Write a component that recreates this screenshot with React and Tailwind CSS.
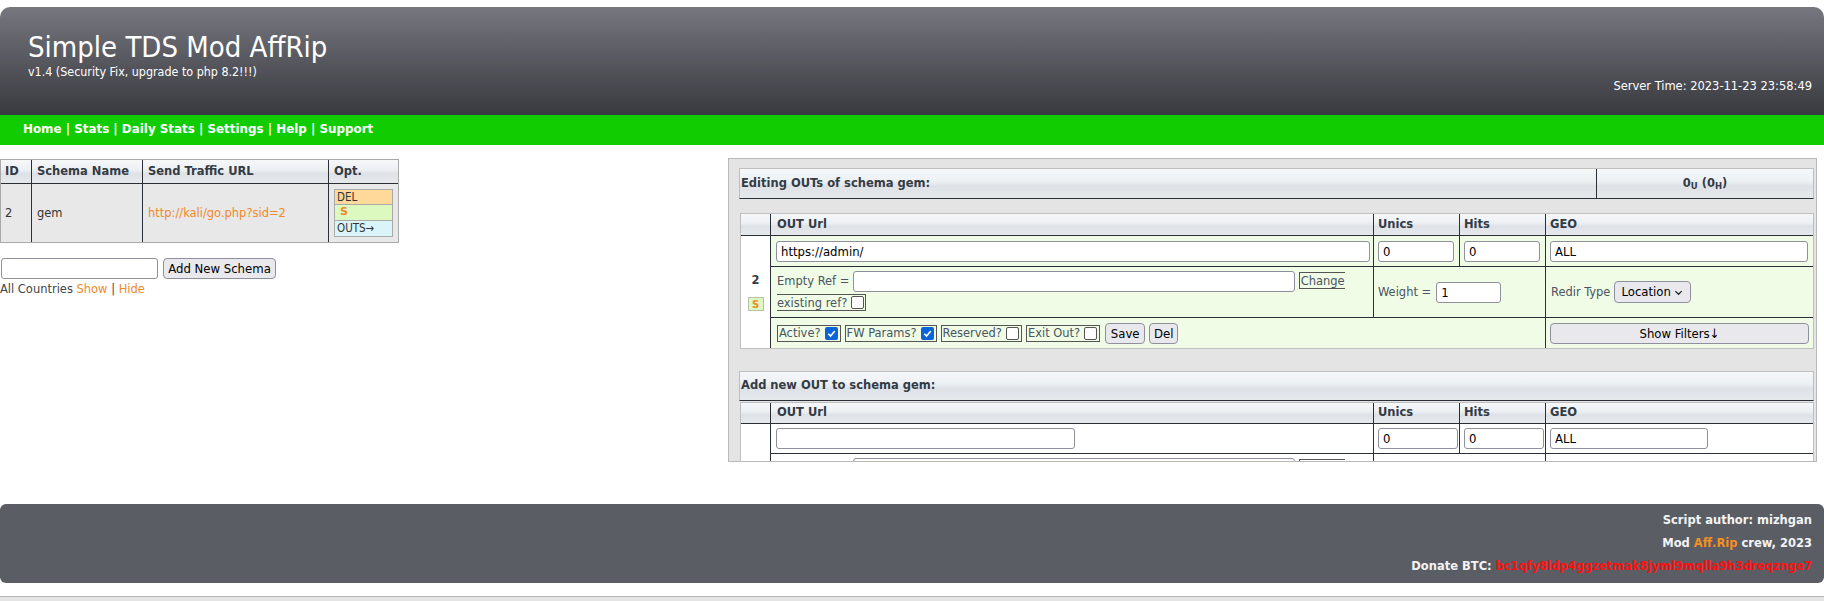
import React from 'react';

const COND = "font-['DejaVu_Sans_Condensed','DejaVu_Sans',sans-serif]";
const WIDE = "font-['DejaVu_Sans',sans-serif]";
const HEAD = 'bg-[linear-gradient(#f5f7f9_0%,#eef1f4_40%,#dee2e7_60%,#e6e9ec_100%)]';
const HTXT = `${WIDE} text-[11.5px] font-bold text-[#333b45]`;
const LINE = 'border-[#2b3038]';

// firefox-ish checkbox
function Check({ on }) {
  if (on) {
    return (
      <span className="inline-flex h-[13px] w-[13px] items-center justify-center rounded-[2px] bg-[#0b63d8]">
        <svg viewBox="0 0 12 12" className="h-[11px] w-[11px]">
          <path d="M2.5 6.3 L5 8.8 L9.6 3.2" stroke="white" strokeWidth="1.8" fill="none" />
        </svg>
      </span>
    );
  }
  return <span className="inline-block h-[13px] w-[13px] rounded-[2px] border border-[#555] bg-white" />;
}

function Field({ value = '', className = '' }) {
  return (
    <input
      readOnly
      value={value}
      className={`h-[21px] rounded-[3px] border border-[#8f8f9d] bg-white px-[4px] text-[13px] text-black outline-none ${className}`}
    />
  );
}

function Btn({ children, className = '' }) {
  return (
    <button className={`h-[21px] rounded-[4px] border border-[#8f8f9d] bg-[#e9e9ed] text-[13px] leading-[19px] text-black ${className}`}>
      {children}
    </button>
  );
}

function Flag({ label, on }) {
  return (
    <span className="inline-flex h-[17px] items-center gap-[4px] border border-[#555] pl-[1px] pr-[2px]">
      {label}
      <Check on={on} />
    </span>
  );
}

function Header() {
  return (
    <div className="pt-[7px]">
      <div className="flex h-[108px] justify-between rounded-t-[10px] bg-linear-to-b from-[#77777f] to-[#393a40] text-white">
        <div className="pl-[28px] pt-[22px]">
          <div className="text-[29px] leading-[36px]">Simple TDS Mod AffRip</div>
          <div className="text-[12.4px] leading-[14px]">v1.4 (Security Fix, upgrade to php 8.2!!!)</div>
        </div>
        <div className="self-end pb-[22px] pr-[12px] text-[12.75px] leading-[14px]">Server Time: 2023-11-23 23:58:49</div>
      </div>
      <div className={`flex h-[30px] items-center bg-[#10cc00] pl-[23px] ${WIDE} text-[11.9px] font-bold text-white`}>
        Home | Stats | Daily Stats | Settings | Help | Support
      </div>
    </div>
  );
}

function LeftSide() {
  const cols = 'grid grid-cols-[30px_111px_186px_70px]';
  return (
    <div className="w-[399px] pt-[1px]">
      <div className="border border-[#a9a9a9]">
        <div className={`${cols} h-[24px] border-b ${LINE} ${HEAD} ${HTXT}`}>
          <div className="flex items-center pl-[4px]">ID</div>
          <div className={`flex items-center border-l ${LINE} pl-[5px]`}>Schema Name</div>
          <div className={`flex items-center border-l ${LINE} pl-[5px]`}>Send Traffic URL</div>
          <div className={`flex items-center border-l ${LINE} pl-[5px]`}>Opt.</div>
        </div>
        <div className={`${cols} h-[58px] bg-[#e8e8e8] text-[#333]`}>
          <div className="flex items-center pl-[4px]">2</div>
          <div className={`flex items-center border-l ${LINE} pl-[5px]`}>gem</div>
          <div className={`flex items-center border-l ${LINE} pl-[5px] text-[#f0892a]`}>http://kali/go.php?sid=2</div>
          <div className={`flex flex-col justify-center border-l ${LINE} pl-[5px] text-[11.5px] leading-[14px]`}>
            <span className="h-[16px] w-[59px] border border-[#aaa] bg-[#ffd99a] pl-[2px]">DEL</span>
            <span className={`h-[16px] w-[59px] border border-t-0 border-[#aaa] bg-[#dcf9c0] pl-[5px] ${WIDE} text-[11px] font-bold text-[#f0892a]`}>S</span>
            <span className="h-[16px] w-[59px] border border-t-0 border-[#aaa] bg-[#d9f5fa] pl-[2px]">OUTS→</span>
          </div>
        </div>
      </div>
      <div className="mt-[15px] flex items-center gap-[5px] pl-[1px]">
        <Field className="w-[157px]" />
        <Btn className="w-[113px] text-[12.5px]">Add New Schema</Btn>
      </div>
      <div className="mt-[3px] leading-[14px] text-[#444]">
        All Countries <span className="text-[#f0892a]">Show</span> | <span className="text-[#f0892a]">Hide</span>
      </div>
    </div>
  );
}

function OutTable({ add }) {
  const bg = add ? 'bg-white' : 'bg-[#f0fce6]';
  const rows = add ? 'grid-rows-[21px_30px_51px_30px]' : 'grid-rows-[22px_31px_51px_30px]';
  const cell = `border-l ${LINE} ${bg}`;
  return (
    <div className="ml-[1px] w-[1074px] border border-[#bfbfbf]">
      <div className={`grid grid-cols-[29px_603px_86px_86px_268px] ${rows} text-[#4a5561]`}>
        <div className={`border-b ${LINE} ${HEAD}`} />
        <div className={`flex items-center border-b border-l ${LINE} ${HEAD} pl-[6px] ${HTXT}`}>OUT Url</div>
        <div className={`flex items-center border-b border-l ${LINE} ${HEAD} pl-[4px] ${HTXT}`}>Unics</div>
        <div className={`flex items-center border-b border-l ${LINE} ${HEAD} pl-[4px] ${HTXT}`}>Hits</div>
        <div className={`flex items-center border-b border-l ${LINE} ${HEAD} pl-[4px] ${HTXT}`}>GEO</div>

        <div className="row-span-3 flex flex-col items-center justify-center gap-[10px] bg-white">
          {!add && (
            <>
              <span className={`${WIDE} text-[11.5px] font-bold leading-[14px] text-[#333b45]`}>2</span>
              <span className={`flex h-[14px] w-[16px] items-center justify-center border border-[#b8c4a8] bg-[#def8c2] ${WIDE} text-[10px] font-bold text-[#f0892a]`}>S</span>
            </>
          )}
        </div>

        <div className={`flex items-center border-b pl-[5px] pr-[3px] ${cell}`}>
          <Field value={add ? '' : 'https://admin/'} className={add ? 'w-[299px]' : 'w-full'} />
        </div>
        <div className={`flex items-center border-b pl-[4px] ${cell}`}>
          <Field value="0" className={add ? 'w-[80px]' : 'w-[76px]'} />
        </div>
        <div className={`flex items-center border-b pl-[4px] ${cell}`}>
          <Field value="0" className={add ? 'w-[80px]' : 'w-[76px]'} />
        </div>
        <div className={`flex items-center border-b pl-[4px] ${cell}`}>
          <Field value="ALL" className={add ? 'w-[158px]' : 'w-[258px]'} />
        </div>

        <div className={`border-b pl-[6px] pt-[3px] leading-[22px] ${cell}`}>
          Empty Ref = <Field className="w-[442px] align-middle" />{' '}
          <span className="border border-[#555] px-[1px]">
            Change
            <br />
            existing ref? <span className="inline-block align-[-2px]"><Check /></span>
          </span>
        </div>
        <div className={`col-span-2 flex items-center gap-[5px] border-b pl-[4px] ${cell}`}>
          Weight = <Field value="1" className="w-[65px]" />
        </div>
        <div className={`flex items-center gap-[4px] border-b pl-[5px] ${cell}`}>
          Redir Type
          <span className="inline-flex h-[22px] w-[77px] items-center justify-between rounded-[4px] border border-[#8f8f9d] bg-[#e9e9ed] pl-[6px] pr-[7px] text-[13px] text-black">
            Location
            <svg viewBox="0 0 10 10" className="h-[9px] w-[9px]">
              <path d="M1.5 3.5 L5 7 L8.5 3.5" stroke="#222" strokeWidth="1.4" fill="none" />
            </svg>
          </span>
        </div>

        <div className={`col-span-3 flex items-center gap-[4px] pl-[6px] ${cell}`}>
          <Flag label="Active?" on />
          <Flag label="FW Params?" on />
          <Flag label="Reserved?" />
          <Flag label="Exit Out?" />
          <Btn className="ml-[1px] w-[40px]">Save</Btn>
          <Btn className="w-[29px]">Del</Btn>
        </div>
        <div className={`flex items-center px-[4px] ${cell}`}>
          <Btn className="w-full">Show Filters↓</Btn>
        </div>
      </div>
    </div>
  );
}

function RightPanel() {
  return (
    <div className="mr-[7px] h-[304px] w-[1089px] overflow-hidden border border-[#b9b9b9] bg-[#e4e4e4] pl-[10px] pt-[9px]">
      <div className={`flex h-[31px] w-[1075px] border border-[#bfbfbf] border-b-[#2b3038] ${HEAD} ${HTXT}`}>
        <div className="flex flex-1 items-center pl-[1px]">Editing OUTs of schema gem:</div>
        <div className={`flex w-[217px] items-center justify-center border-l ${LINE}`}>
          0<sub className="text-[8.5px]">U</sub>&nbsp;(0<sub className="text-[8.5px]">H</sub>)
        </div>
      </div>
      <div className="mt-[14px]">
        <OutTable />
      </div>
      <div className={`mt-[22px] flex h-[30px] w-[1075px] items-center border border-[#bfbfbf] border-b-[#2b3038] pl-[1px] ${HEAD} ${HTXT}`}>
        Add new OUT to schema gem:
      </div>
      <div className="mt-[1px]">
        <OutTable add />
      </div>
    </div>
  );
}

function Footer() {
  return (
    <div className={`mt-[42px] h-[79px] rounded-[6px] bg-[#5a5d64] pr-[12px] pt-[5px] text-right ${WIDE} text-[11.5px] font-bold leading-[23px] text-[#f4f4f4]`}>
      <div>Script author: mizhgan</div>
      <div>
        Mod <span className="text-[#f5901e]">Aff.Rip</span> crew, 2023
      </div>
      <div>
        Donate BTC: <span className="text-[#ff1010]">bc1qfy8ldp4ggzetmak8jyml9mqlla9h3dreqznge7</span>
      </div>
    </div>
  );
}

export default function App() {
  return (
    <div className={`min-h-[601px] bg-white ${COND} text-[12.75px] text-[#444]`}>
      <Header />
      <div className="flex items-start justify-between pt-[13px]">
        <LeftSide />
        <RightPanel />
      </div>
      <Footer />
      <div className="mt-[13px] h-[6px] border-t border-[#b5b5b5] bg-[#e4e4e4]" />
    </div>
  );
}
